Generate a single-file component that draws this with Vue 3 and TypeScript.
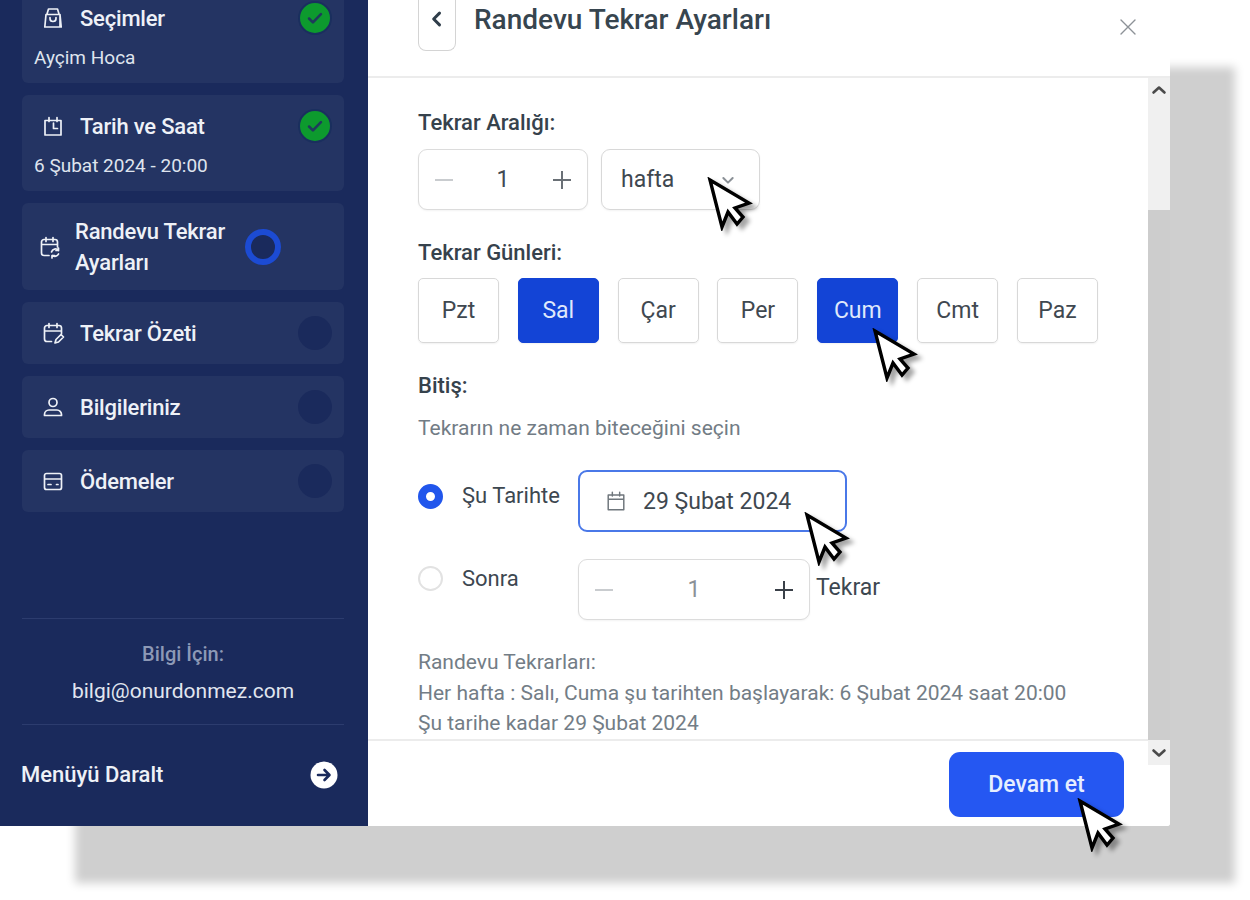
<template>
  <div class="page">
    <div class="window">
      <aside class="sidebar">
        <div class="steps">
          <div v-for="step in steps" :key="step.title" class="step" :class="{ tall: step.sub }">
            <div class="step-head">
              <svg class="step-icon" viewBox="0 0 24 24" fill="none" stroke="currentColor" stroke-width="1.7" stroke-linecap="round" stroke-linejoin="round">
                <path :d="step.icon" />
              </svg>
              <span class="step-title">{{ step.title }}</span>
              <span class="status" :class="step.state">
                <svg v-if="step.state === 'done'" viewBox="0 0 24 24" fill="none" stroke="#1f3a5c" stroke-width="2.4" stroke-linecap="round" stroke-linejoin="round">
                  <path d="M6.5 12.5l3.6 3.6 7.4-7.6" />
                </svg>
              </span>
            </div>
            <div v-if="step.sub" class="step-sub">{{ step.sub }}</div>
          </div>
        </div>
        <div class="contact">
          <div class="contact-label">Bilgi İçin:</div>
          <div class="contact-mail">bilgi@onurdonmez.com</div>
        </div>
        <div class="collapse">
          <span>Menüyü Daralt</span>
          <svg class="collapse-icon" viewBox="0 0 28 28">
            <circle cx="14" cy="14" r="13.5" fill="#fff" />
            <path d="M8 14h11M14.5 9l5 5-5 5" fill="none" stroke="#1a2a5c" stroke-width="2.6" stroke-linecap="round" stroke-linejoin="round" />
          </svg>
        </div>
      </aside>

      <main class="main">
        <header class="top">
          <button class="back">
            <svg viewBox="0 0 12 12" fill="none" stroke="#2f3d4a" stroke-width="1.8" stroke-linecap="round" stroke-linejoin="round">
              <path d="M7.5 2.5L4 6l3.5 3.5" />
            </svg>
          </button>
          <h1>Randevu Tekrar Ayarları</h1>
          <svg class="close" viewBox="0 0 16 16" fill="none" stroke="#8d9297" stroke-width="1.4" stroke-linecap="round">
            <path d="M1 1l14 14M15 1L1 15" />
          </svg>
        </header>

        <section class="content">
          <div class="label first">Tekrar Aralığı:</div>
          <div class="interval">
            <div class="stepper small">
              <span class="minus"></span>
              <span class="value">1</span>
              <span class="plus"></span>
            </div>
            <div class="select">
              <span>hafta</span>
              <svg viewBox="0 0 12 12" fill="none" stroke="#8a9096" stroke-width="1.5" stroke-linecap="round" stroke-linejoin="round">
                <path d="M2.5 4.5L6 8l3.5-3.5" />
              </svg>
            </div>
          </div>

          <div class="label">Tekrar Günleri:</div>
          <div class="days">
            <div v-for="day in days" :key="day.name" class="day" :class="{ on: day.on }">{{ day.name }}</div>
          </div>

          <div class="label">Bitiş:</div>
          <div class="hint">Tekrarın ne zaman biteceğini seçin</div>

          <div class="end-row">
            <span class="radio checked"></span>
            <span class="opt">Şu Tarihte</span>
            <div class="date">
              <svg viewBox="0 0 24 24" fill="none" stroke="#6f767c" stroke-width="1.6" stroke-linecap="round" stroke-linejoin="round">
                <path d="M3.5 5.5h17v16h-17zM3.5 10h17M8 2.5v4M16 2.5v4" />
              </svg>
              <span>29 Şubat 2024</span>
            </div>
          </div>
          <div class="end-row after">
            <span class="radio"></span>
            <span class="opt">Sonra</span>
            <div class="stepper wide">
              <span class="minus"></span>
              <span class="value muted">1</span>
              <span class="plus dark"></span>
            </div>
            <span class="times">Tekrar</span>
          </div>

          <p class="note">
            Randevu Tekrarları:<br />
            Her hafta : Salı, Cuma şu tarihten başlayarak: 6 Şubat 2024 saat 20:00<br />
            Şu tarihe kadar 29 Şubat 2024
          </p>
        </section>

        <footer class="bottom">
          <button class="next">Devam et</button>
        </footer>

        <div class="scrollbar">
          <div class="arrow up">
            <svg viewBox="0 0 16 10" fill="none" stroke="#4a4a4a" stroke-width="2.6" stroke-linecap="round" stroke-linejoin="round"><path d="M2.5 7.5L8 2.5l5.5 5" /></svg>
          </div>
          <div class="thumb"></div>
          <div class="arrow down">
            <svg viewBox="0 0 16 10" fill="none" stroke="#4a4a4a" stroke-width="2.6" stroke-linecap="round" stroke-linejoin="round"><path d="M2.5 2.5L8 7.5l5.5-5" /></svg>
          </div>
        </div>
      </main>
    </div>

    <svg v-for="(c, i) in cursors" :key="i" class="cursor" :style="{ left: c.x + 'px', top: c.y + 'px' }" viewBox="-3 -3 46 54">
      <path d="M0 0L39 23 25 28 33 37 27 44 18 32 12 47Z" fill="#fff" stroke="#000" stroke-width="3.4" stroke-linejoin="miter" />
    </svg>
  </div>
</template>

<script setup lang="ts">
interface Step {
  title: string
  sub?: string
  icon: string
  state: 'done' | 'current' | 'todo'
}

const steps: Step[] = [
  {
    title: 'Seçimler',
    sub: 'Ayçim Hoca',
    icon: 'M5 8.5h14v12.5H3.8zM3.8 21L5 8.5M19 8.5L20.2 21H3.8M6 8l1.5-5h9L18 8M9 11.5v1a3 3 0 0 0 6 0v-1',
    state: 'done'
  },
  {
    title: 'Tarih ve Saat',
    sub: '6 Şubat 2024 - 20:00',
    icon: 'M4 6.5h16V21H4zM8 3.5v4M16 3.5v4M12.5 9v5.5h4',
    state: 'done'
  },
  {
    title: 'Randevu Tekrar Ayarları',
    icon: 'M11 20.5H6a2.5 2.5 0 0 1-2.5-2.5V7A2.5 2.5 0 0 1 6 4.5h11A2.5 2.5 0 0 1 19.5 7v5M3.5 9.5h16M8 2.5v4M15 2.5v4M13.5 17a4 4 0 0 1 7-1.5M20.5 13v2.5H18M20.5 19a4 4 0 0 1-6 1.5M14 23v-2.5h2.5',
    state: 'current'
  },
  {
    title: 'Tekrar Özeti',
    icon: 'M10.5 20.5H6A2.5 2.5 0 0 1 3.5 18V7A2.5 2.5 0 0 1 6 4.5h12A2.5 2.5 0 0 1 20.5 7v5.5M3.5 10h17M8 2.5v4M16 2.5v4M14 22l1-3.5 5-5 2.5 2.5-5 5z',
    state: 'todo'
  },
  {
    title: 'Bilgileriniz',
    icon: 'M12 3.5a4 4 0 1 1 0 8 4 4 0 0 1 0-8zM8 15h8a4.5 4.5 0 0 1 4.5 4.5v1H3.5v-1A4.5 4.5 0 0 1 8 15z',
    state: 'todo'
  },
  {
    title: 'Ödemeler',
    icon: 'M5.5 4.5h13a2 2 0 0 1 2 2v12a2 2 0 0 1-2 2h-13a2 2 0 0 1-2-2v-12a2 2 0 0 1 2-2zM3.5 10h17M7 15.5h3M15.5 15.5h1.5',
    state: 'todo'
  }
]

const days = [
  { name: 'Pzt', on: false },
  { name: 'Sal', on: true },
  { name: 'Çar', on: false },
  { name: 'Per', on: false },
  { name: 'Cum', on: true },
  { name: 'Cmt', on: false },
  { name: 'Paz', on: false }
]

const cursors = [
  { x: 707, y: 177 },
  { x: 872, y: 328 },
  { x: 804, y: 512 },
  { x: 1077, y: 798 }
]
</script>

<style>
html,
body {
  background: #fff;
}
</style>

<style scoped>
.page {
  position: relative;
  width: 1250px;
  height: 900px;
  overflow: hidden;
  background: #fff;
  font-family: Roboto, "Liberation Sans", sans-serif;
}

.window {
  display: flex;
  width: 1170px;
  height: 826px;
  overflow: hidden;
  background: #fff;
  border-bottom-right-radius: 3px;
  box-shadow: 70px 62px 9px -5px #cfcfcf;
}

/* sidebar */
.sidebar {
  display: flex;
  flex-direction: column;
  flex: 0 0 368px;
  background: #1a2a5c;
  padding: 0 24px 0 21px;
  box-sizing: border-box;
}

.steps {
  display: flex;
  flex-direction: column;
  gap: 12px;
  margin-top: -13px;
  height: 631px;
  margin-left: 1px;
}

.step {
  display: flex;
  flex-direction: column;
  justify-content: center;
  min-height: 62px;
  background: #243463;
  border-radius: 6px;
  padding: 0 13px 0 12px;
  box-sizing: border-box;
}

.step.tall {
  height: 96px;
  justify-content: flex-start;
  padding-top: 14px;
}

.step:nth-child(3) {
  height: 87px;
}

.step-head {
  display: flex;
  align-items: center;
  color: #eef1f7;
  padding-left: 7px;
}

.step-icon {
  width: 24px;
  height: 24px;
  flex: none;
  margin-right: 15px;
}

.step-title {
  flex: 1;
  font-size: 22px;
  font-weight: 500;
  line-height: 31px;
  letter-spacing: -0.2px;
}

.step:nth-child(3) .step-title {
  max-width: 170px;
  margin-left: -2px;
}

.step:nth-child(3) .step-icon {
  margin-left: -3px;
}

.status {
  flex: none;
  width: 34px;
  height: 34px;
  border-radius: 50%;
  background: #1a2a5c;
  box-sizing: border-box;
  margin-right: -1px;
}

.status.done {
  background: #0d9a2e;
  border: 2px solid #1a2f5e;
  padding: 2px;
}

.status.done svg {
  display: block;
  width: 100%;
  height: 100%;
}

.status.current {
  width: 36px;
  height: 36px;
  margin-right: -2px;
  border: 6px solid #1c4bd3;
}

.step-sub {
  color: #dfe4ee;
  font-size: 19px;
  line-height: 26px;
  margin-top: 10px;
}

.contact {
  text-align: center;
  border-top: 1px solid #2c3c6e;
  border-bottom: 1px solid #2c3c6e;
  margin-left: 1px;
  height: 107px;
  box-sizing: border-box;
  padding-top: 20px;
}

.contact-label {
  color: #8d99b6;
  font-size: 20px;
  font-weight: 500;
  line-height: 30px;
}

.contact-mail {
  color: #e1e6f0;
  font-size: 21px;
  line-height: 30px;
  margin-top: 7px;
}

.collapse {
  display: flex;
  justify-content: space-between;
  align-items: center;
  color: #eef1f7;
  font-size: 22px;
  font-weight: 500;
  margin-top: 34px;
  height: 30px;
}

.collapse-icon {
  width: 28px;
  height: 28px;
  margin-top: 2px;
  margin-right: 6px;
}

/* main panel */
.main {
  position: relative;
  flex: 1;
  display: flex;
  flex-direction: column;
  min-width: 0;
}

.top {
  display: flex;
  align-items: flex-start;
  flex: 0 0 78px;
  box-sizing: border-box;
  padding: 0 34px 0 50px;
  border-bottom: 2px solid #ececec;
}

.back {
  width: 38px;
  height: 51px;
  padding: 0;
  flex: none;
  background: #fff;
  border: 1px solid #d4d4d4;
  border-top: none;
  border-radius: 0 0 8px 8px;
  display: flex;
  align-items: center;
  justify-content: center;
  margin-right: 18px;
  padding-bottom: 12px;
}

.back svg {
  width: 20px;
  height: 20px;
}

h1 {
  flex: 1;
  margin: 0;
  color: #37454f;
  font-size: 28px;
  font-weight: 500;
  line-height: 40px;
}

.close {
  width: 16px;
  height: 16px;
  margin-top: 19px;
}

.content {
  flex: 1;
  overflow: hidden;
  padding: 0 50px;
  color: #3d4750;
}

.label {
  margin-top: 28px;
  font-size: 22px;
  font-weight: 500;
  line-height: 30px;
  color: #36424c;
}

.label.first {
  margin-top: 30px;
}

.interval {
  display: flex;
  gap: 13px;
  margin-top: 11px;
}

.stepper {
  display: flex;
  align-items: center;
  justify-content: space-between;
  height: 61px;
  box-sizing: border-box;
  border: 1px solid #dcdcdc;
  border-radius: 9px;
  padding: 0 16px;
  background: #fff;
  box-shadow: 0 1px 2px rgba(0, 0, 0, 0.05);
}

.stepper.small {
  width: 170px;
}

.stepper.wide {
  width: 232px;
}

.minus,
.plus {
  position: relative;
  width: 18px;
  height: 18px;
  flex: none;
}

.minus::before,
.plus::before,
.plus::after {
  content: "";
  position: absolute;
  left: 0;
  right: 0;
  top: 8px;
  height: 2px;
  background: #c9cccf;
}

.plus::before,
.plus::after {
  background: #6a7076;
}

.plus::after {
  left: 8px;
  right: 8px;
  top: 0;
  width: 2px;
  height: 18px;
}

.plus.dark::before,
.plus.dark::after {
  background: #3a4048;
}

.value {
  font-size: 23px;
  color: #414a52;
}

.value.muted {
  color: #8b9197;
}

.select {
  display: flex;
  align-items: center;
  justify-content: space-between;
  width: 159px;
  height: 61px;
  box-sizing: border-box;
  border: 1px solid #d8d8d8;
  border-radius: 9px;
  padding: 0 23px 0 19px;
  font-size: 23px;
  color: #3f4850;
  box-shadow: 0 1px 2px rgba(0, 0, 0, 0.05);
}

.select svg {
  width: 16px;
  height: 16px;
}

.days {
  display: flex;
  justify-content: space-between;
  width: 680px;
  margin-top: 10px;
}

.day {
  display: flex;
  align-items: center;
  justify-content: center;
  width: 81px;
  height: 65px;
  box-sizing: border-box;
  border: 1px solid #d8d8d8;
  border-radius: 5px;
  font-size: 23px;
  color: #3f4850;
  box-shadow: 0 1px 2px rgba(0, 0, 0, 0.06);
}

.day.on {
  background: #1344d6;
  border-color: #1344d6;
  color: #dfe8fb;
}

.hint {
  margin-top: 12px;
  font-size: 21px;
  line-height: 30px;
  color: #727c85;
}

.end-row {
  display: flex;
  align-items: flex-start;
  margin-top: 27px;
}

.end-row.after {
  --opt-top: 7px;
}

.radio {
  flex: none;
  width: 25px;
  height: 25px;
  box-sizing: border-box;
  border-radius: 50%;
  border: 2px solid #e2e2e2;
  margin: calc(var(--opt-top, 14px)) 19px 0 0;
}

.radio.checked {
  border: 8.5px solid #2156ec;
  background: #fff;
}

.opt {
  flex: 0 0 116px;
  font-size: 22px;
  line-height: 26px;
  margin-top: var(--opt-top, 13px);
  color: #3d4750;
}

.date {
  display: flex;
  align-items: center;
  width: 269px;
  height: 62px;
  box-sizing: border-box;
  border: 2px solid #4a78e8;
  border-radius: 9px;
  padding-left: 25px;
  font-size: 23px;
  color: #3f4850;
}

.date svg {
  width: 22px;
  height: 22px;
  margin-right: 16px;
}

.times {
  margin: 14px 0 0 6px;
  font-size: 23px;
  line-height: 30px;
  color: #3d4750;
}

.note {
  margin: 27px 0 0;
  font-size: 21px;
  line-height: 30.5px;
  color: #737d86;
  white-space: nowrap;
}

.bottom {
  flex: 0 0 87px;
  box-sizing: border-box;
  display: flex;
  justify-content: flex-end;
  border-top: 2px solid #ececec;
  padding: 11px 46px 0 0;
  background: #fff;
}

.next {
  width: 175px;
  height: 65px;
  border: none;
  border-radius: 11px;
  background: #2557f2;
  color: #e6eeff;
  font-family: inherit;
  font-size: 23px;
  font-weight: 500;
}

/* over the panel, and it runs down into the footer */
.scrollbar {
  position: absolute;
  top: 78px;
  right: 0;
  width: 22px;
  height: 687px;
  display: flex;
  flex-direction: column;
  background: #f0f0f0;
}

.arrow {
  flex: none;
  height: 25px;
  display: flex;
  align-items: center;
  justify-content: center;
}

.arrow.up {
  height: 132px;
  align-items: flex-start;
  padding-top: 7px;
  box-sizing: border-box;
}

.arrow svg {
  width: 16px;
  height: 10px;
}

.thumb {
  flex: 1;
  background: #cdcdcd;
}

.cursor {
  position: absolute;
  width: 46px;
  height: 54px;
  filter: drop-shadow(5px 4px 2px rgba(0, 0, 0, 0.35));
}
</style>
